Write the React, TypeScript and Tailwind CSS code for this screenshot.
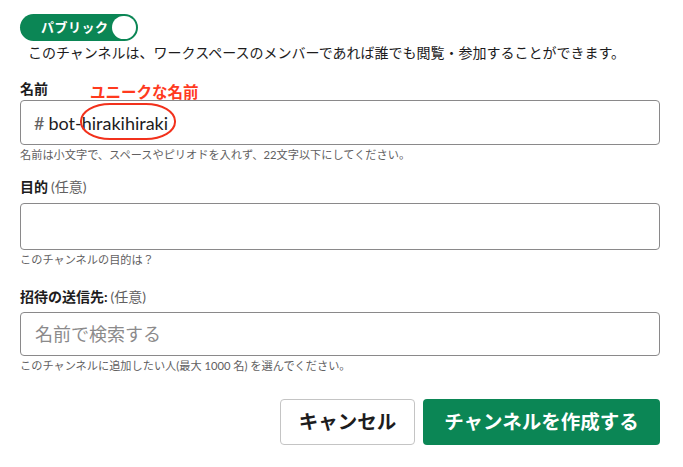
import React from "react";

const font = { fontFamily: "Lato, 'Noto Sans CJK JP', sans-serif" };

export default function App() {
  return (
    <div className="w-[683px] h-[467px] bg-white text-[#1d1c1d] flex flex-col pl-5 pr-[23px]" style={font}>
      <div className="mt-[14px] flex">
        <div className="w-[118px] h-[27px] rounded-full bg-[#0b8655] flex items-center justify-between pl-[21px] pr-[2px]">
          <span className="text-white font-bold text-[13px] tracking-[0.5px]">パブリック</span>
          <span className="w-[24px] h-[23px] rounded-full bg-white"></span>
        </div>
      </div>
      <p className="mt-[2px] ml-2 text-[14px] leading-[20px] text-[#1d1c1d]">
        このチャンネルは、ワークスペースのメンバーであれば誰でも閲覧・参加することができます。
      </p>

      <div className="mt-[16px] flex items-end h-[20px]">
        <span className="font-bold text-[14px] leading-[20px]">名前</span>
        <span className="ml-[42px] font-bold text-[15.5px] leading-[20px] text-[#ff3a1e] relative top-[3px]">ユニークな名前</span>
      </div>
      <div className="mt-[1px] h-[45px] border border-[#8a898a] rounded-[4px] flex items-center pl-[13px] pt-[2px] relative">
        <span className="text-[18px] text-[#616061]">#</span>
        <span className="text-[18px] ml-[4px]">bot-hirakihiraki</span>
        <span className="absolute left-[59px] top-[2px] w-[96px] h-[37px] rounded-[30px/18px] border-2 border-[#f2311c]"></span>
      </div>
      <p className="mt-[3px] text-[11.2px] leading-[14px] text-[#616061]">
        名前は小文字で、スペースやピリオドを入れず、22文字以下にしてください。
      </p>

      <div className="mt-[15px] flex items-end">
        <span className="font-bold text-[14px] leading-[20px]">目的</span>
        <span className="ml-[3px] text-[14px] leading-[20px] text-[#616061]">(任意)</span>
      </div>
      <div className="mt-[6px] h-[47px] border border-[#8a898a] rounded-[4px]"></div>
      <p className="mt-[3px] text-[11.2px] leading-[14px] text-[#616061]">このチャンネルの目的は？</p>

      <div className="mt-[20px] flex items-end">
        <span className="font-bold text-[14px] leading-[20px]">招待の送信先:</span>
        <span className="ml-[3px] text-[14px] leading-[20px] text-[#616061]">(任意)</span>
      </div>
      <div className="mt-[5px] h-[44px] border border-[#8a898a] rounded-[4px] flex items-center pl-[14px]">
        <span className="text-[18px] text-[#8b8a8b]">名前で検索する</span>
      </div>
      <p className="mt-[3px] text-[11.2px] leading-[14px] text-[#616061]">
        このチャンネルに追加したい人(最大 1000 名) を選んでください。
      </p>

      <div className="mt-[26px] flex justify-end gap-[8px]">
        <button className="w-[135px] h-[46px] border border-[#c4c4c4] rounded-[4px] bg-white font-bold text-[19.5px] text-[#1d1c1d]">
          キャンセル
        </button>
        <button className="w-[237px] h-[46px] rounded-[4px] bg-[#0b8655] font-bold text-[19.5px] text-white">
          チャンネルを作成する
        </button>
      </div>
    </div>
  );
}
